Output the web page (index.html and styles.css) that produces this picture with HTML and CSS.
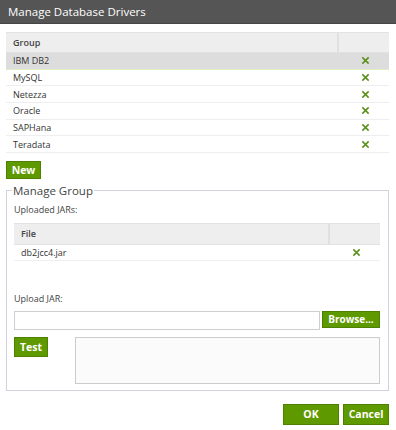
FILE: index.html
```html
<!DOCTYPE html>
<html>
<head>
<meta charset="utf-8">
<link rel="stylesheet" href="styles.css">
</head>
<body>
<div class="dialog">
  <div class="titlebar">Manage Database Drivers</div>
  <div class="body">
    <div class="grid groups">
      <div class="grid-head">
        <div class="c-name">Group</div>
        <div class="c-act"></div>
      </div>
      <div class="grid-row selected"><div class="c-name">IBM DB2</div><div class="c-act"><svg class="x" viewBox="0 0 10 10"><path d="M1.5 1.5 L8.5 8.5 M8.5 1.5 L1.5 8.5"/></svg></div></div>
      <div class="grid-row"><div class="c-name">MySQL</div><div class="c-act"><svg class="x" viewBox="0 0 10 10"><path d="M1.5 1.5 L8.5 8.5 M8.5 1.5 L1.5 8.5"/></svg></div></div>
      <div class="grid-row"><div class="c-name">Netezza</div><div class="c-act"><svg class="x" viewBox="0 0 10 10"><path d="M1.5 1.5 L8.5 8.5 M8.5 1.5 L1.5 8.5"/></svg></div></div>
      <div class="grid-row"><div class="c-name">Oracle</div><div class="c-act"><svg class="x" viewBox="0 0 10 10"><path d="M1.5 1.5 L8.5 8.5 M8.5 1.5 L1.5 8.5"/></svg></div></div>
      <div class="grid-row"><div class="c-name">SAPHana</div><div class="c-act"><svg class="x" viewBox="0 0 10 10"><path d="M1.5 1.5 L8.5 8.5 M8.5 1.5 L1.5 8.5"/></svg></div></div>
      <div class="grid-row"><div class="c-name">Teradata</div><div class="c-act"><svg class="x" viewBox="0 0 10 10"><path d="M1.5 1.5 L8.5 8.5 M8.5 1.5 L1.5 8.5"/></svg></div></div>
    </div>
    <button class="btn btn-new">New</button>
    <fieldset class="group-box">
      <legend>Manage Group</legend>
      <div class="label">Uploaded JARs:</div>
      <div class="grid files">
        <div class="grid-head">
          <div class="c-name">File</div>
          <div class="c-act"></div>
        </div>
        <div class="grid-row"><div class="c-name">db2jcc4.jar</div><div class="c-act"><svg class="x" viewBox="0 0 10 10"><path d="M1.5 1.5 L8.5 8.5 M8.5 1.5 L1.5 8.5"/></svg></div></div>
      </div>
      <div class="label upload-label">Upload JAR:</div>
      <div class="upload-row">
        <input class="file-input" type="text">
        <button class="btn btn-browse">Browse...</button>
      </div>
      <div class="test-row">
        <button class="btn btn-test">Test</button>
        <textarea class="result"></textarea>
      </div>
    </fieldset>
    <div class="footer">
      <button class="btn btn-ok">OK</button>
      <button class="btn btn-cancel">Cancel</button>
    </div>
  </div>
</div>
</body>
</html>
```
FILE: styles.css
```css
html, body {
  margin: 0;
  padding: 0;
  background: #fff;
}
body {
  font-family: "Open Sans", "Noto Sans", sans-serif;
  font-size: 9px;
  color: #333;
  width: 396px;
  height: 430px;
  overflow: hidden;
}
.titlebar {
  height: 24px;
  background: #555;
  color: #fff;
  font-size: 11.5px;
  line-height: 24px;
  padding-left: 8px;
  border-bottom: 1px solid #444;
  box-sizing: border-box;
}
.body {
  padding: 8px 7px 0 6px;
}
.grid {
  display: flex;
  flex-direction: column;
}
.grid-head {
  display: flex;
  height: 21px;
  background: #eeeeee;
  border-top: 1px solid #e2e2e2;
  border-bottom: 1px solid #e2e2e2;
  font-weight: 600;
  color: #444;
  box-sizing: border-box;
}
.grid-head .c-act {
  border-left: 2px solid #e0e0e0;
}
.grid-row {
  display: flex;
  height: 16.67px;
  border-bottom: 1px solid #eeeeee;
  box-sizing: border-box;
}
.grid-row.selected {
  background: #dddddd;
  border-bottom-color: #dcefc0;
}
.c-name {
  flex: 1;
  display: flex;
  align-items: center;
  padding-left: 7px;
}
.c-act {
  width: 50px;
  display: flex;
  align-items: center;
  justify-content: center;
}
.x {
  width: 9px;
  height: 9px;
  margin-left: 2px;
}
.x path {
  stroke: #5b8f1b;
  stroke-width: 1.7;
  fill: none;
}
.btn {
  font-family: "Open Sans", "Noto Sans", sans-serif;
  font-weight: 700;
  font-size: 10px;
  color: #fff;
  background: #5f9900;
  border: 1px solid #4f8100;
  padding: 0;
  margin: 0;
  box-sizing: border-box;
  cursor: pointer;
}
.btn-new {
  display: block;
  margin-top: 8px;
  width: 35px;
  height: 18px;
  font-size: 10.5px;
}
.group-box {
  margin: 4px 0 0 0;
  padding: 6px 8px 5px 7px;
  border: 1px solid #d4d1de;
  height: 208px;
  box-sizing: border-box;
}
.group-box legend {
  font-size: 11.5px;
  color: #444;
  padding: 0 1px;
  margin-left: -2px;
}
.label {
  color: #444;
  line-height: 12px;
}
.files {
  margin-top: 7px;
}
.files .grid-head {
  height: 22px;
}
.files .grid-row {
  height: 16px;
}
.upload-label {
  margin-top: 32px;
}
.upload-row {
  display: flex;
  margin-top: 6px;
  height: 19px;
  gap: 2px;
}
.file-input {
  flex: 1;
  margin: 0;
  border: 1px solid #cfcfcf;
  height: 19px;
  box-sizing: border-box;
  padding: 0 3px;
}
.btn-browse {
  width: 58px;
  height: 17px;
}
.test-row {
  display: flex;
  margin-top: 7px;
  gap: 27px;
}
.btn-test {
  width: 34px;
  height: 20px;
  font-size: 10.5px;
}
.result {
  flex: 1;
  height: 47px;
  margin: 0;
  border: 1px solid #cccccc;
  background: #fbfbfb;
  box-sizing: border-box;
  resize: none;
  padding: 0;
}
.footer {
  display: flex;
  justify-content: flex-end;
  gap: 4px;
  margin-top: 13px;
}
.btn-ok {
  width: 56px;
  height: 21px;
  font-size: 10.5px;
}
.btn-cancel {
  width: 46px;
  height: 21px;
  font-size: 10.5px;
}
```
